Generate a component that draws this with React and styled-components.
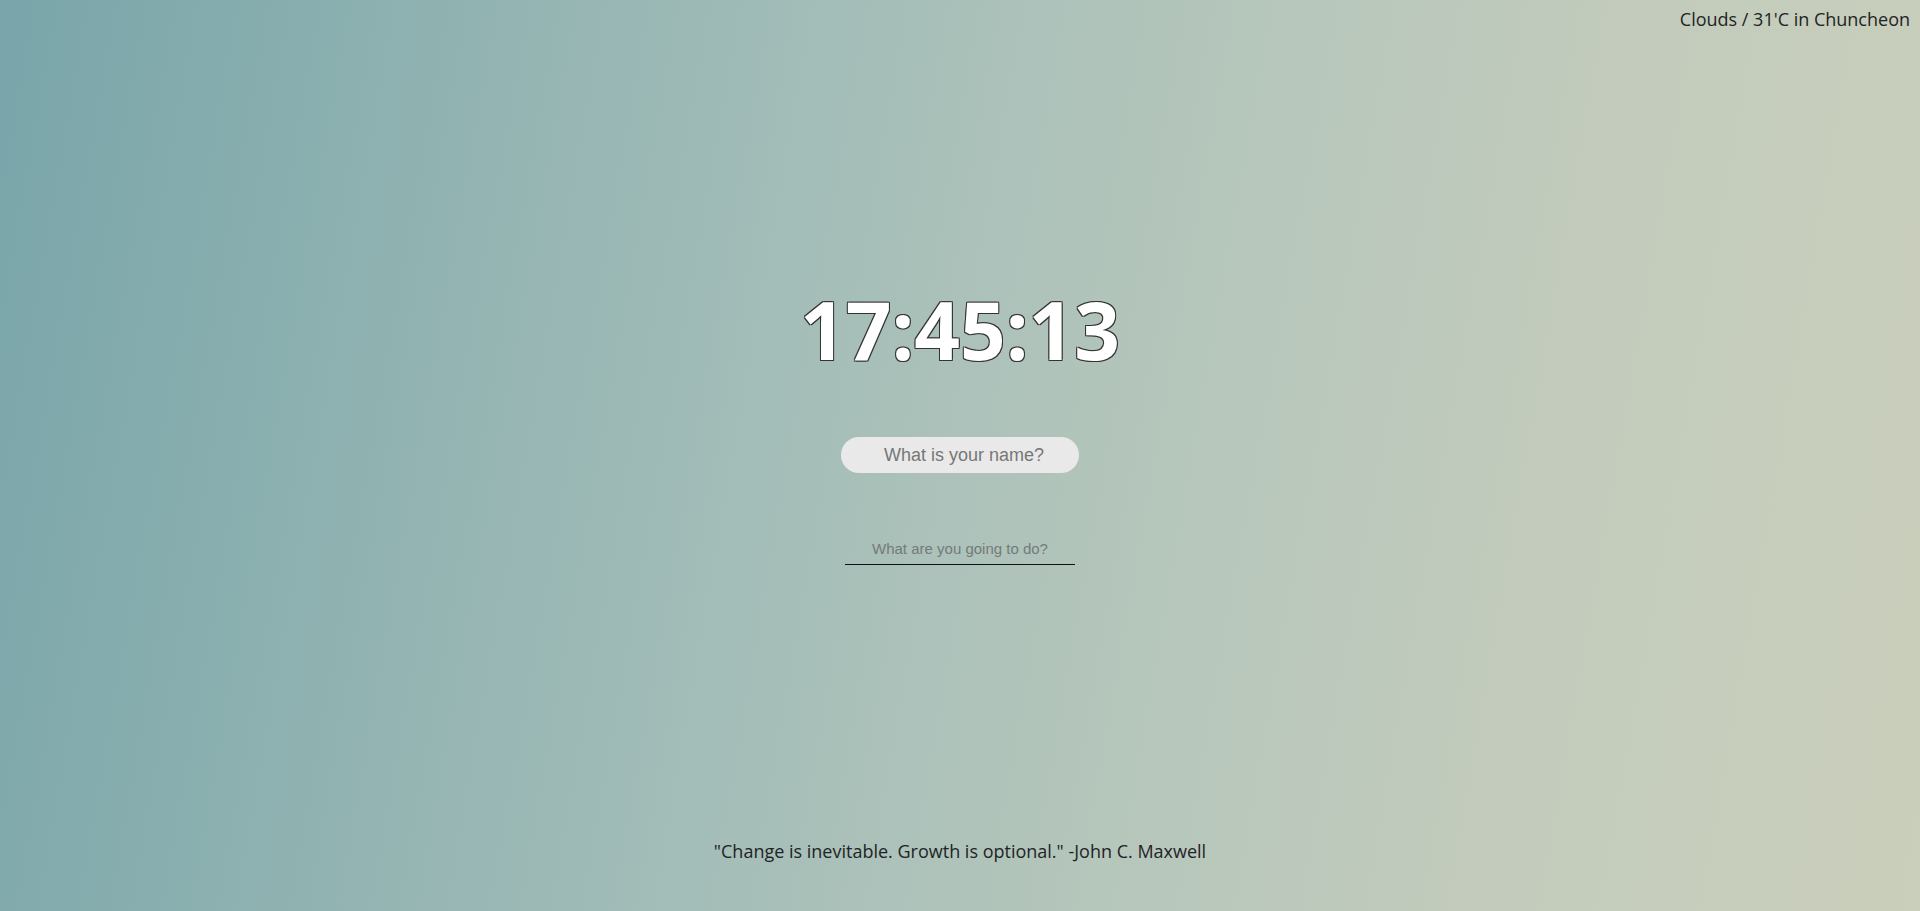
import React from "react";
import styled, { createGlobalStyle } from "styled-components";

const GlobalStyle = createGlobalStyle`
  html, body { margin: 0; padding: 0; height: 100%; }
  body { font-family: "Open Sans", "Noto Sans", sans-serif; }
  #root { min-height: 100vh; }
  * { box-sizing: border-box; }
`;

const Page = styled.div`
  min-height: 100vh;
  display: flex;
  flex-direction: column;
  background: linear-gradient(100deg, #79a5aa 0%, #8cb0b0 18%, #a3bdb8 40%, #b5c6bb 60%, #c2cbbc 78%, #cacfbb 100%);
  color: #222;
  overflow: hidden;
`;

const Header = styled.header`
  display: flex;
  justify-content: flex-end;
  padding: 7px 10px 0 0;
`;

const Weather = styled.span`
  font-size: 18px;
  line-height: 24px;
  color: #1e2426;
`;

const Main = styled.main`
  flex: 1;
  display: flex;
  flex-direction: column;
  align-items: center;
  padding-top: 248px;
`;

const Clock = styled.h1`
  margin: 0;
  font-family: "Open Sans", sans-serif;
  font-weight: 700;
  font-size: 80px;
  line-height: 100px;
  letter-spacing: 0;
  color: #fff;
  text-shadow: -1px -1px 0 #333, 1px -1px 0 #333, -1px 1px 0 #333, 1px 1px 0 #333, 0 0 1px #333;
`;

const NameForm = styled.form`
  margin-top: 58px;
  display: flex;
`;

const NameInput = styled.input`
  width: 238px;
  height: 36px;
  border: none;
  border-radius: 18px;
  background: #e9e9e9;
  font-family: "Liberation Sans", Arial, sans-serif;
  font-size: 18px;
  text-align: center;
  padding: 0 0 0 8px;
  outline: none;
  &::placeholder { color: #777; }
`;

const TodoForm = styled.form`
  margin-top: 60px;
  display: flex;
`;

const TodoInput = styled.input`
  width: 230px;
  height: 32px;
  border: none;
  border-bottom: 1px solid #111;
  background: transparent;
  font-family: "Liberation Sans", Arial, sans-serif;
  font-size: 15px;
  text-align: center;
  padding: 0;
  outline: none;
  &::placeholder { color: #737b7a; }
`;

const Footer = styled.footer`
  display: flex;
  justify-content: center;
  padding-bottom: 48px;
`;

const Quote = styled.p`
  margin: 0;
  font-size: 18px;
  line-height: 24px;
  color: #1e2426;
`;

export default function App() {
  return (
    <>
      <GlobalStyle />
      <Page>
        <Header>
          <Weather>Clouds / 31'C in Chuncheon</Weather>
        </Header>
        <Main>
          <Clock>17:45:13</Clock>
          <NameForm onSubmit={(e) => e.preventDefault()}>
            <NameInput type="text" placeholder="What is your name?" />
          </NameForm>
          <TodoForm onSubmit={(e) => e.preventDefault()}>
            <TodoInput type="text" placeholder="What are you going to do?" />
          </TodoForm>
        </Main>
        <Footer>
          <Quote>"Change is inevitable. Growth is optional." -John C. Maxwell</Quote>
        </Footer>
      </Page>
    </>
  );
}
